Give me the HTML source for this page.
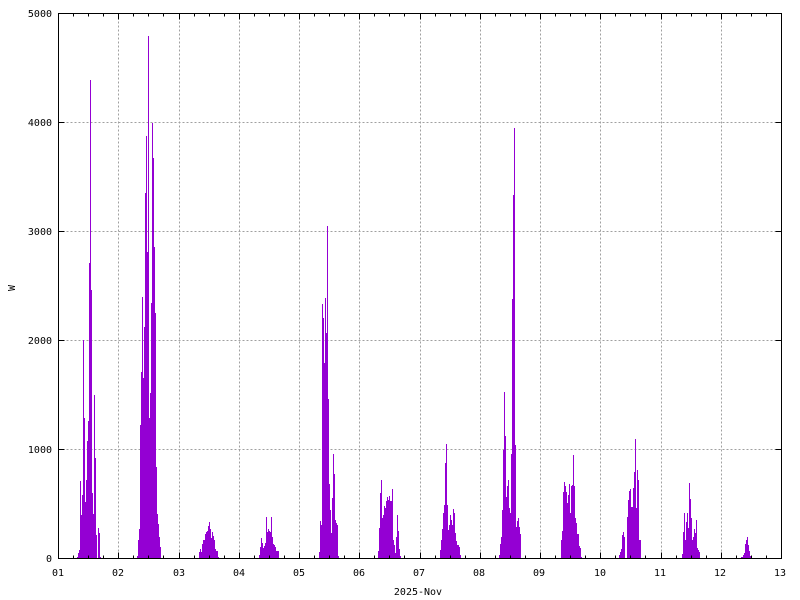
<!DOCTYPE html>
<html>
<head>
<meta charset="utf-8">
<title>Power plot 2025-Nov</title>
<style>
html,body{margin:0;padding:0;background:#fff}
svg{display:block}
text{font-family:"DejaVu Sans Mono","Liberation Mono",monospace;font-size:10px;fill:#000}
</style>
</head>
<body>
<svg width="800" height="600" viewBox="0 0 800 600" xmlns="http://www.w3.org/2000/svg">
<rect width="800" height="600" fill="#fff"/>
<g transform="translate(.5 .5)" shape-rendering="crispEdges" fill="none">
<path stroke="#a0a0a0" stroke-dasharray="2 2" d="M58 122H781M58 231H781M58 340H781M58 449H781M118 13V558M179 13V558M239 13V558M299 13V558M359 13V558M420 13V558M480 13V558M540 13V558M600 13V558M661 13V558M721 13V558"/>
</g>
<path transform="translate(.5 0)" shape-rendering="crispEdges" fill="none" stroke="#9400d3" stroke-width="1" d="
M77 558V557M78 558V553M79 558V550M80 558V481M81 558V515M82 558V495M83 558V340M84 558V418M85 558V502M86 558V480M87 558V441M88 558V421M89 558V263M90 558V80M91 558V290M92 558V493M93 558V514M94 558V395M95 558V458M96 558V535M98 558V528M99 558V533M100 558V557
M137 558V556M138 558V540M139 558V529M140 558V425M141 558V372M142 558V297M143 558V378M144 558V327M145 558V193M146 558V136M147 558V252M148 558V36M149 558V418M150 558V393M151 558V303M152 558V123M153 558V158M154 558V247M155 558V313M156 558V467M157 558V514M158 558V524M159 558V537M160 558V547
M199 558V552M200 558V549M201 558V552M202 558V544M203 558V540M204 558V540M205 558V534M206 558V532M207 558V531M208 558V526M209 558V522M210 558V529M211 558V538M212 558V532M213 558V536M214 558V540M215 558V549M216 558V551M217 558V551M218 558V557
M259 558V555M260 558V547M261 558V538M262 558V543M263 558V548M264 558V546M265 558V543M266 558V517M267 558V532M268 558V529M269 558V531M270 558V532M271 558V517M272 558V537M273 558V544M274 558V545M275 558V547M276 558V551M277 558V551M278 558V551
M319 558V552M320 558V521M321 558V525M322 558V304M323 558V318M324 558V363M325 558V298M326 558V333M327 558V226M328 558V399M329 558V484M330 558V510M331 558V533M332 558V498M333 558V454M334 558V474M335 558V520M336 558V523M337 558V525M338 558V556
M378 558V551M379 558V528M380 558V493M381 558V480M382 558V518M383 558V515M384 558V506M385 558V508M386 558V501M387 558V497M388 558V500M389 558V496M390 558V501M391 558V501M392 558V489M393 558V540M394 558V545M395 558V553M396 558V537M397 558V515M398 558V531M399 558V549M400 558V556
M440 558V550M441 558V540M442 558V529M443 558V513M444 558V505M445 558V463M446 558V444M447 558V505M448 558V530M449 558V525M450 558V515M451 558V520M452 558V525M453 558V509M454 558V513M455 558V533M456 558V541M457 558V545M458 558V545M459 558V547M460 558V555
M499 558V555M500 558V544M501 558V537M502 558V510M503 558V450M504 558V392M505 558V436M506 558V497M507 558V486M508 558V480M509 558V508M510 558V513M511 558V454M512 558V299M513 558V195M514 558V128M515 558V445M516 558V527M517 558V521M518 558V518M519 558V527M520 558V534
M561 558V540M562 558V531M563 558V492M564 558V482M565 558V486M566 558V492M567 558V503M568 558V495M569 558V484M570 558V513M571 558V486M572 558V485M573 558V455M574 558V486M575 558V518M576 558V523M577 558V534M578 558V534M579 558V546M580 558V548M581 558V557
M619 558V555M620 558V552M621 558V549M622 558V535M623 558V532M624 558V537M627 558V517M628 558V500M629 558V491M630 558V489M631 558V507M632 558V507M633 558V488M634 558V472M635 558V439M636 558V508M637 558V470M638 558V480M639 558V540M640 558V540
M682 558V554M683 558V532M684 558V513M685 558V540M686 558V522M687 558V513M688 558V528M689 558V483M690 558V499M691 558V518M692 558V540M693 558V537M694 558V529M695 558V533M696 558V520M697 558V548M698 558V550M699 558V552
M741 558V557M742 558V557M743 558V555M744 558V553M745 558V544M746 558V540M747 558V537M748 558V545M749 558V551M750 558V556
"/>
<g transform="translate(.5 .5)" shape-rendering="crispEdges" fill="none" stroke="#000" stroke-width="1">
<rect x="58" y="13" width="723" height="545"/>
<path d="M58 122H64M58 231H64M58 340H64M58 449H64M781 122H775M781 231H775M781 340H775M781 449H775"/>
<path d="M118 558V552M179 558V552M239 558V552M299 558V552M359 558V552M420 558V552M480 558V552M540 558V552M600 558V552M661 558V552M721 558V552M118 13V19M179 13V19M239 13V19M299 13V19M359 13V19M420 13V19M480 13V19M540 13V19M600 13V19M661 13V19M721 13V19"/>
<path d="M73 558V555M88 558V555M103 558V555M133 558V555M148 558V555M163 558V555M194 558V555M209 558V555M224 558V555M254 558V555M269 558V555M284 558V555M314 558V555M329 558V555M344 558V555M374 558V555M389 558V555M404 558V555M435 558V555M450 558V555M465 558V555M495 558V555M510 558V555M525 558V555M555 558V555M570 558V555M585 558V555M615 558V555M630 558V555M645 558V555M676 558V555M691 558V555M706 558V555M736 558V555M751 558V555M766 558V555"/>
<path d="M73 13V16M88 13V16M103 13V16M133 13V16M148 13V16M163 13V16M194 13V16M209 13V16M224 13V16M254 13V16M269 13V16M284 13V16M314 13V16M329 13V16M344 13V16M374 13V16M389 13V16M404 13V16M435 13V16M450 13V16M465 13V16M495 13V16M510 13V16M525 13V16M555 13V16M570 13V16M585 13V16M615 13V16M630 13V16M645 13V16M676 13V16M691 13V16M706 13V16M736 13V16M751 13V16M766 13V16"/>
</g>
<g text-anchor="end">
<text x="52" y="17">5000</text>
<text x="52" y="126">4000</text>
<text x="52" y="235">3000</text>
<text x="52" y="344">2000</text>
<text x="52" y="453">1000</text>
<text x="52" y="562">0</text>
</g>
<g text-anchor="middle">
<text x="58" y="576">01</text>
<text x="118" y="576">02</text>
<text x="179" y="576">03</text>
<text x="239" y="576">04</text>
<text x="299" y="576">05</text>
<text x="359" y="576">06</text>
<text x="419" y="576">07</text>
<text x="479" y="576">08</text>
<text x="539" y="576">09</text>
<text x="600" y="576">10</text>
<text x="660" y="576">11</text>
<text x="720" y="576">12</text>
<text x="780" y="576">13</text>
<text x="418" y="595">2025-Nov</text>
<text transform="translate(15 288) rotate(-90)" x="0" y="0">W</text>
</g>
</svg>
</body>
</html>
